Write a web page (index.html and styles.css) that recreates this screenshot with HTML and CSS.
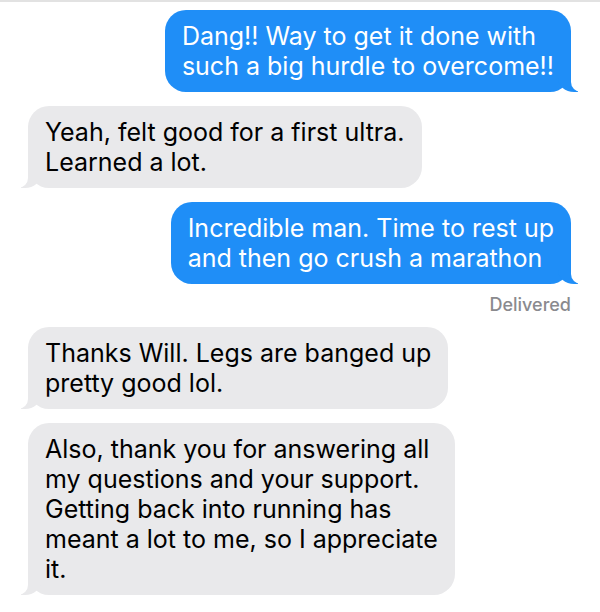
FILE: index.html
```html
<!DOCTYPE html>
<html lang="en">

<head>
    <meta charset="UTF-8">
    <meta name="viewport" content="width=device-width, initial-scale=1.0">
    <title>Messages</title>
    <link rel="stylesheet" href="styles.css">
</head>

<body>
    <div class="chat">
        <div class="msg sent">Dang!! Way to get it done with<br>such a big hurdle to overcome!!</div>
        <div class="msg received">Yeah, felt good for a first ultra.<br>Learned a lot.</div>
        <div class="msg sent">Incredible man. Time to rest up<br>and then go crush a marathon</div>
        <div class="status">Delivered</div>
        <div class="msg received">Thanks Will. Legs are banged up<br>pretty good lol.</div>
        <div class="msg received">Also, thank you for answering all<br>my questions and your support.<br>Getting back into running has<br>meant a lot to me, so I appreciate<br>it.</div>
    </div>
</body>

</html>
```

FILE: styles.css
```css
* {
    padding: 0;
    margin: 0;
    box-sizing: border-box;
}

body {
    background: #fff;
    font-family: Inter, "Liberation Sans", sans-serif;
}

.chat {
    border-top: 2px solid #e2e2e2;
    padding: 8px 29px 0 28px;
    display: flex;
    flex-direction: column;
}

.msg {
    position: relative;
    font-size: 25px;
    line-height: 30px;
    padding: 11px 17px;
    border-radius: 21px;
    margin-bottom: 14px;
}

/* 蓝色的气泡 */
.sent {
    align-self: flex-end;
    background: #1f8ef7;
    color: #fff;
}

/* 灰色的气泡 */
.received {
    align-self: flex-start;
    background: #e9e9eb;
    color: #000;
}

/* 小尾巴 */
.sent::before, .received::before {
    content: '';
    position: absolute;
    bottom: 0;
    width: 20px;
    height: 22px;
}

.sent::after, .received::after {
    content: '';
    position: absolute;
    bottom: 0;
    width: 26px;
    height: 22px;
    background: #fff;
}

.sent::before {
    right: -7px;
    background: #1f8ef7;
    border-bottom-left-radius: 16px 14px;
}

.sent::after {
    right: -26px;
    border-bottom-left-radius: 10px;
}

.received::before {
    left: -7px;
    background: #e9e9eb;
    border-bottom-right-radius: 16px 14px;
}

.received::after {
    left: -26px;
    border-bottom-right-radius: 10px;
}

.status {
    align-self: flex-end;
    font-size: 18px;
    line-height: 22px;
    font-weight: 500;
    color: #8a8a8e;
    margin: -4px 0 11px;
}
```
